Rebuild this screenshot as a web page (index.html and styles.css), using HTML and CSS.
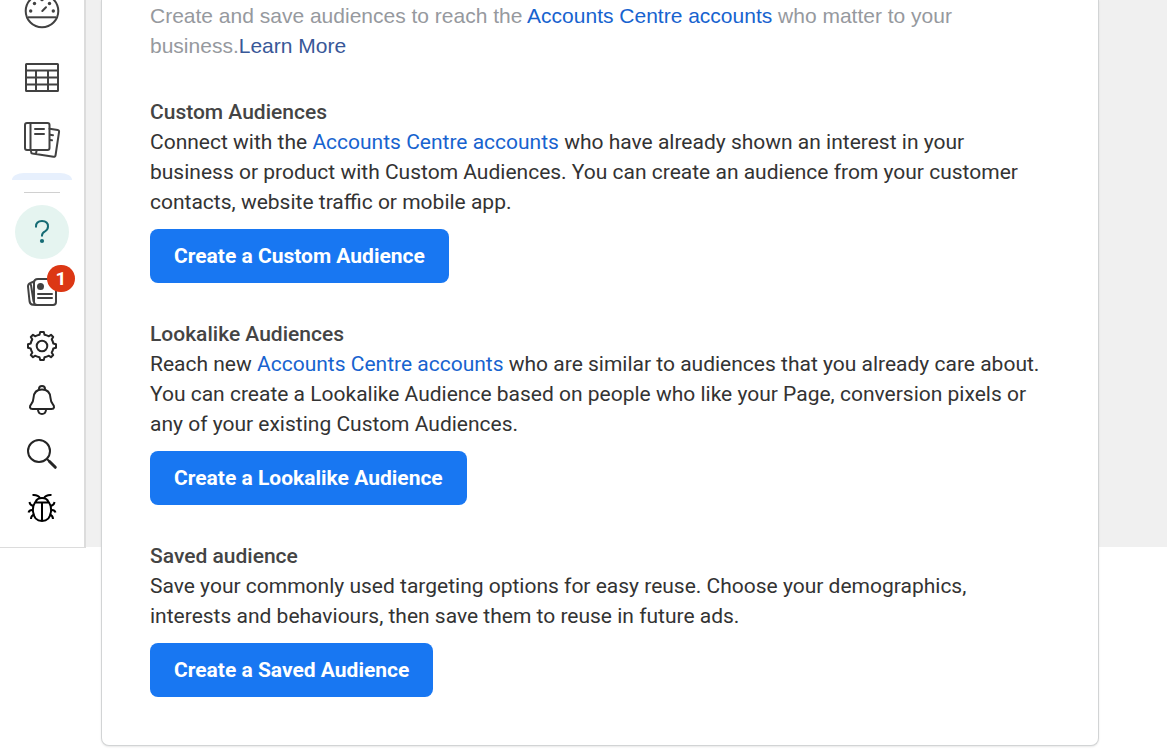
FILE: index.html
```html
<!DOCTYPE html>
<html lang="en">
<head>
<meta charset="utf-8">
<meta name="viewport" content="width=device-width, initial-scale=1">
<title>Audiences</title>
<link rel="stylesheet" href="styles.css">
</head>
<body>
<div class="page">
  <nav class="sidebar" aria-label="Tools">
    <button class="tool tool-first" type="button" aria-label="Overview">
      <svg width="36" height="47" viewBox="24 0 36 47" fill="none" stroke="#414141" stroke-width="2">
        <circle cx="42" cy="11" r="16.3"/>
        <path d="M28 17.3H56"/><path d="M42.3 11 46 7.200" stroke-linecap="round"/>
        <g fill="#414141" stroke="none"><circle cx="30.700" cy="11" r="1.700"/><circle cx="34.500" cy="3.500" r="1.700"/><circle cx="42" cy="-.4" r="1.700"/><circle cx="49.500" cy="3.500" r="1.700"/><circle cx="53.300" cy="11" r="1.700"/></g>
      </svg>
    </button>
    <button class="tool tool-tall" type="button" aria-label="Campaigns">
      <svg width="36" height="30" viewBox="0 0 36 30" fill="none" stroke="#414141" stroke-width="2">
        <rect x="2" y="1" width="32" height="27" rx=".5"/><path d="M2 7.500H34M2 14.500H34M2 21.500H34M12 7.500V28M24 7.500V28"/>
      </svg>
    </button>
    <button class="tool tool-tall" type="button" aria-label="Reports">
      <svg width="38" height="38" viewBox="23 121 38 38" fill="none" stroke="#414141" stroke-width="2" stroke-linejoin="round" stroke-linecap="round">
        <rect x="25" y="123" width="24.500" height="27" rx="2"/><path d="M30.500 123V150M35 129H44M35 134H44"/>
        <path d="M49.500 128.700 57.800 129.900Q59.300 130.200 59.100 131.700L55.600 155Q55.300 157 53.500 156.700L32.500 153.500Q31 153.200 31 151.500M36 153.800 36.500 151M50 134.800 53 135.200M50 140 52 140.300"/>
      </svg>
    </button>
    <div class="selected-tab"></div>
    <hr class="divider">
    <button class="tool help" type="button" aria-label="Help">
      <svg width="30" height="30" viewBox="27 217 30 30" fill="none" stroke="#156b74" stroke-width="2">
        <path d="M36 227.500V226.500Q36 221 42 221T48 226.500Q48 229.500 45 231.300Q42 232.900 42 235.500V236.500"/><circle cx="42" cy="241" r="2.100" fill="#156b74" stroke="none"/>
      </svg>
    </button>
    <button class="tool news" type="button" aria-label="News, 1 new">
      <svg width="34" height="34" viewBox="25 275 34 34" fill="none" stroke="#414141" stroke-width="2" stroke-linejoin="round" stroke-linecap="round">
        <path d="M38 279H53Q56 279 56 282V302Q56 305 53 305H37Q34 305 34 302V283Q34 279 38 279Z"/>
        <path d="M34 281.500 30.500 283Q28 284 28 286.500L29.500 301Q30 304.500 33 304.700L37 305M31 285 33.500 301" />
        <path d="M38 294H52M38 298H52"/><circle cx="40.500" cy="286.500" r="3.500" fill="#414141" stroke="none"/>
      </svg>
      <span class="badge">1</span>
    </button>
    <button class="tool" type="button" aria-label="Settings">
      <svg width="34" height="34" viewBox="-17 -17 34 34" fill="none" stroke="#252525" stroke-width="2" stroke-linejoin="round">
        <circle r="5.300"/>
        <path d="M-1.800-14H1.800L2.500-11.300Q5-10.800 6.600-9.700L9-11.200 11.200-9 9.700-6.600Q10.800-5 11.300-2.500L14-1.800V1.800L11.300 2.500Q10.800 5 9.700 6.600L11.200 9 9 11.200 6.600 9.700Q5 10.800 2.500 11.300L1.800 14H-1.800L-2.500 11.300Q-5 10.800-6.600 9.700L-9 11.200-11.200 9-9.700 6.600Q-10.800 5-11.300 2.500L-14 1.800V-1.800L-11.300-2.500Q-10.800-5-9.700-6.600L-11.200-9-9-11.200-6.600-9.700Q-5-10.800-2.500-11.300Z"/>
      </svg>
    </button>
    <button class="tool" type="button" aria-label="Notifications">
      <svg width="34" height="34" viewBox="25 383 34 34" fill="none" stroke="#252525" stroke-width="2" stroke-linejoin="round">
        <path d="M39 390V389Q39 386 42 386T45 389V390M38 410Q38.500 414 42 414T46 410"/>
        <path d="M42 389.500Q34 389.500 33.500 398Q33.300 402 31 404.500Q29.800 405.700 30 407.500Q30.300 409 32.500 409H51.500Q53.700 409 54 407.500Q54.200 405.700 53 404.500Q50.700 402 50.500 398Q50 389.500 42 389.500Z"/>
      </svg>
    </button>
    <button class="tool" type="button" aria-label="Search">
      <svg width="34" height="34" viewBox="25 437 34 34" fill="none" stroke="#252525" stroke-width="2">
        <circle cx="39" cy="451" r="11"/><path d="M47 459 50 462"/><path d="M49.500 461.500 55.300 467.300" stroke-width="3" stroke-linecap="round"/>
      </svg>
    </button>
    <button class="tool" type="button" aria-label="Report a bug">
      <svg width="34" height="34" viewBox="25 491 34 34" fill="none" stroke="#000" stroke-width="2">
        <path d="M35 502.500H49Q51.500 506 51 511.500Q50 521 42 521T33 511.500Q32.500 506 35 502.500ZM42 502.500V521M35.500 502Q37 498 42 498T48.500 502"/>
        <path d="M32.500 495Q38 494.500 40 498M51.500 495Q46 494.500 44 498M29.500 502Q30 505.500 34 506M54.500 502Q54 505.500 50 506M28.500 512.500Q29.500 509.500 33 510M55.500 512.500Q54.500 509.500 51 510M31 519Q31 515.500 34.500 514.500M53 519Q53 515.500 49.500 514.500"/>
      </svg>
    </button>
  </nav>
  <div class="backdrop"></div>
  <main class="card">
    <p class="intro">Create and save audiences to reach the <a href="#accounts">Accounts Centre accounts</a> who matter to your business.<a class="learn-more" href="#learn">Learn More</a></p>
    <section class="audience">
      <h2>Custom Audiences</h2>
      <p>Connect with the <a href="#accounts">Accounts Centre accounts</a> who have already shown an interest in your business or product with Custom Audiences. You can create an audience from your customer contacts, website traffic or mobile app.</p>
      <button class="create" type="button">Create a Custom Audience</button>
    </section>
    <section class="audience">
      <h2>Lookalike Audiences</h2>
      <p>Reach new <a href="#accounts">Accounts Centre accounts</a> who are similar to audiences that you already care about. You can create a Lookalike Audience based on people who like your Page, conversion pixels or any of your existing Custom Audiences.</p>
      <button class="create" type="button">Create a Lookalike Audience</button>
    </section>
    <section class="audience">
      <h2>Saved audience</h2>
      <p>Save your commonly used targeting options for easy reuse. Choose your demographics, interests and behaviours, then save them to reuse in future ads.</p>
      <button class="create" type="button">Create a Saved Audience</button>
    </section>
  </main>
</div>
</body>
</html>
```
FILE: styles.css
```css
* {
  box-sizing: border-box;
}

body {
  margin: 0;
  background: #fff;
  color: #333;
  font: 21px/30px Roboto, sans-serif;
}

button {
  font: inherit;
  border: 0;
  cursor: pointer;
}

a {
  color: #1763cf;
  text-decoration: none;
}

.page {
  display: grid;
  grid-template-columns: 86px 1fr;
  grid-template-rows: auto 1fr;
}

.sidebar {
  grid-area: 1 / 1;
  z-index: 1;
  display: flex;
  flex-direction: column;
  align-items: center;
  padding: 0 0 12px;
  background: #fff;
  border-right: 2px solid #dcdcdc;
  border-bottom: 1px solid #dcdcdc;
}

.tool {
  display: flex;
  align-items: center;
  justify-content: center;
  width: 54px;
  height: 54px;
  padding: 0;
  background: none;
}

.tool-first {
  height: 47px;
}

.tool-tall {
  height: 62px;
}

.selected-tab {
  width: 60px;
  height: 7px;
  margin-top: 2px;
  border-radius: 12px 12px 0 0 / 7px 7px 0 0;
  background: #e7f0fd;
}

.divider {
  width: 36px;
  margin: 12px 0;
  border: 0;
  border-top: 1px solid #d0d0d0;
}

.help {
  border-radius: 50%;
  background: #e5f4f0;
}

.news {
  position: relative;
  margin-top: 6px;
}

.badge {
  position: absolute;
  top: 0;
  right: -6px;
  width: 28px;
  height: 27px;
  border-radius: 14px;
  background: #dc3714;
  color: #fff;
  font-size: 19px;
  font-weight: 700;
  line-height: 28px;
  text-align: center;
}

.backdrop {
  grid-area: 1 / 2;
  margin-bottom: 1px;
  background: #f0f0f0;
}

.card {
  grid-area: 1 / 2 / 3 / 3;
  margin: 0 68px 7px 15px;
  padding: 1px 48px 48px;
  background: #fff;
  border: solid #d2d4d5;
  border-width: 0 1px 1px;
  border-radius: 0 0 8px 8px;
  box-shadow: 0 1px 2px #00000018;
}

.intro {
  margin: 0;
  color: #96999e;
  font-family: "Liberation Sans", Arial, sans-serif;
}

.intro .learn-more {
  color: #385898;
}

.audience {
  margin-top: 36px;
}

.audience h2 {
  margin: 0;
  color: #444;
  font-size: 21px;
  font-weight: 500;
  line-height: 30px;
}

.audience p {
  margin: 0 0 12px;
}

.create {
  display: block;
  height: 54px;
  padding: 0 24px;
  border-radius: 8px;
  background: #1877f2;
  color: #fff;
  font-weight: 700;
}
```
